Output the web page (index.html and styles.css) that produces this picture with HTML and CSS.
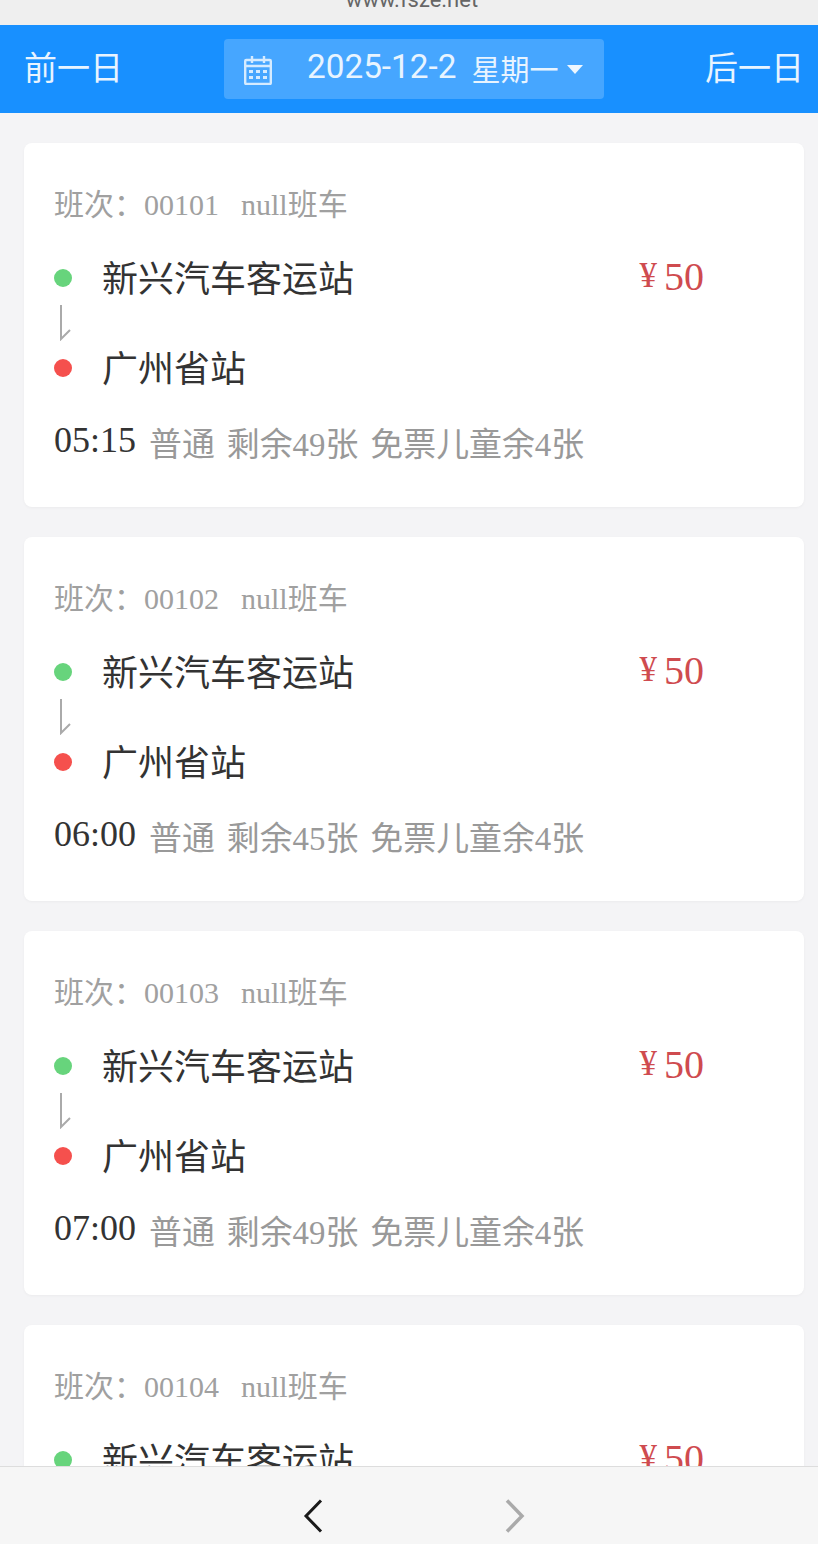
FILE: index.html
```html
<!DOCTYPE html>
<html lang="en">
<head>
	<meta charset="UTF-8">
	<title>班次列表</title>
	<link rel="stylesheet" href="styles.css">
</head>
<body>
	<div class="site-bar"><span>www.fsze.net</span></div>

	<div class="date-bar">
		<a class="day-link">前一日</a>
		<div class="date-box">
			<svg class="cal-icon" width="28" height="30" viewBox="0 0 28 30" fill="none" stroke="#d5ebff" stroke-width="2.400">
				<rect x="1.200" y="5" width="25.600" height="24" rx="1"/>
				<path d="M1 11h26M8 1v7M20 1v7"/>
				<path d="M5 15h4v3h-4zM12 15h4v3h-4zM19 15h4v3h-4zM5 21h4v3h-4zM12 21h4v3h-4zM19 21h4v3h-4z" fill="#d5ebff" stroke="none"/>
			</svg>
			<span class="date-num">2025-12-2</span>
			<span class="date-week">星期一</span>
			<i class="caret"></i>
		</div>
		<a class="day-link">后一日</a>
	</div>

	<div class="list">
		<div class="card">
			<div class="card-head"><span>班次：00101</span><span>null班车</span></div>
			<div class="station">
				<i class="dot green"></i><span class="name">新兴汽车客运站</span>
				<span class="price"><em>¥</em>50</span>
			</div>
			<div class="arrow-row">
				<svg width="12" height="36" viewBox="0 0 12 36" fill="none" stroke="#aaa" stroke-width="2"><path d="M2 0v34l9-9"/></svg>
			</div>
			<div class="station">
				<i class="dot red"></i><span class="name">广州省站</span>
			</div>
			<div class="card-foot"><span class="time">05:15</span><span>普通</span><span>剩余49张</span><span>免票儿童余4张</span></div>
		</div>

		<div class="card">
			<div class="card-head"><span>班次：00102</span><span>null班车</span></div>
			<div class="station">
				<i class="dot green"></i><span class="name">新兴汽车客运站</span>
				<span class="price"><em>¥</em>50</span>
			</div>
			<div class="arrow-row">
				<svg width="12" height="36" viewBox="0 0 12 36" fill="none" stroke="#aaa" stroke-width="2"><path d="M2 0v34l9-9"/></svg>
			</div>
			<div class="station">
				<i class="dot red"></i><span class="name">广州省站</span>
			</div>
			<div class="card-foot"><span class="time">06:00</span><span>普通</span><span>剩余45张</span><span>免票儿童余4张</span></div>
		</div>

		<div class="card">
			<div class="card-head"><span>班次：00103</span><span>null班车</span></div>
			<div class="station">
				<i class="dot green"></i><span class="name">新兴汽车客运站</span>
				<span class="price"><em>¥</em>50</span>
			</div>
			<div class="arrow-row">
				<svg width="12" height="36" viewBox="0 0 12 36" fill="none" stroke="#aaa" stroke-width="2"><path d="M2 0v34l9-9"/></svg>
			</div>
			<div class="station">
				<i class="dot red"></i><span class="name">广州省站</span>
			</div>
			<div class="card-foot"><span class="time">07:00</span><span>普通</span><span>剩余49张</span><span>免票儿童余4张</span></div>
		</div>

		<div class="card">
			<div class="card-head"><span>班次：00104</span><span>null班车</span></div>
			<div class="station">
				<i class="dot green"></i><span class="name">新兴汽车客运站</span>
				<span class="price"><em>¥</em>50</span>
			</div>
		</div>
	</div>

	<div class="browser-bar">
		<svg width="20" height="34" viewBox="0 0 20 34" fill="none" stroke="#1a1a1a" stroke-width="3"><path d="M18 1.500L3 17l15 15.500"/></svg>
		<svg width="20" height="34" viewBox="0 0 20 34" fill="none" stroke="#aaa" stroke-width="3.500"><path d="M2 1.500L17 17 2 32.500"/></svg>
	</div>
</body>
</html>
```

FILE: styles.css
```css
*{margin: 0; padding: 0; box-sizing: border-box;}
body{
	width: 818px;
	height: 1544px;
	display: flex;
	flex-direction: column;
	overflow: hidden;
	background: #f4f4f6;
	font-family: "Liberation Serif", "Noto Sans CJK SC", serif;
}

.site-bar{
	flex: none;
	height: 25px;
	overflow: hidden;
	background: #efefef;
	text-align: center;
	color: #666;
	font-family: "Roboto", "Liberation Sans", sans-serif;
	font-size: 22px;
	line-height: 22px;
	padding-left: 6px;
}
.site-bar span{display: block; margin-top: -11px;}

.date-bar{
	flex: none;
	height: 88px;
	padding: 0 17px 0 25px;
	display: flex;
	align-items: center;
	justify-content: space-between;
	background: #1890ff;
	color: #e8f4ff;
	font-family: "Roboto", "Noto Sans CJK SC", sans-serif;
}
.day-link{font-size: 33px; width: 96px; white-space: nowrap; padding-bottom: 7px; margin-left: -1px;}
.date-box{
	width: 380px;
	height: 60px;
	margin-left: 2px;
	padding-left: 20px;
	display: flex;
	align-items: center;
	background: #46a6ff;
	border-radius: 4px;
}
.cal-icon{flex: none; margin-top: 2px;}
.date-num{font-size: 33.300px; margin-left: 35px; margin-top: -6px;}
.date-week{font-size: 29px; margin-left: 15px; margin-top: -2px;}
.caret{
	width: 0;
	height: 0;
	margin-left: 9px;
	border-left: 8px solid transparent;
	border-right: 8px solid transparent;
	border-top: 9px solid #eef7ff;
}

.list{
	flex: 1;
	min-height: 0;
	overflow: hidden;
	padding: 30px 14px 0 24px;
	display: flex;
	flex-direction: column;
	gap: 30px;
}
.card{
	flex: none;
	padding: 40px 30px 41px;
	background: #fff;
	border-radius: 8px;
	box-shadow: 0 1px 3px rgba(0,0,0,.04);
}
.card-head{
	display: flex;
	gap: 22px;
	height: 44px;
	margin-bottom: 21px;
	font-size: 30px;
	line-height: 44px;
	color: #a0a0a0;
}

.station{
	height: 60px;
	display: flex;
	align-items: center;
	color: #333;
}
.dot{
	flex: none;
	width: 18px;
	height: 18px;
	border-radius: 50%;
}
.green{background: #67d47c;}
.red{background: #f5504d;}
.name{flex: 1; margin-left: 30px; font-size: 36px; padding-bottom: 5px;}
.price{
	margin-right: 70px;
	font-size: 40px;
	color: #cf4b4f;
	padding-bottom: 3px;
}
.price em{font-style: normal; font-size: 35px; margin-right: 7px; vertical-align: 3px;}

.arrow-row{height: 30px; display: flex; align-items: center; padding-left: 5px;}
.arrow-row svg{flex: none;}

.card-foot{
	display: flex;
	align-items: center;
	gap: 12px;
	height: 50px;
	margin-top: 18px;
	font-size: 32.900px;
	color: #999;
}
.time{font-size: 36px; color: #333; margin-right: 1px; padding-bottom: 2px;}

.browser-bar{
	flex: none;
	height: 78px;
	padding: 32px 0 0 303px;
	display: flex;
	align-items: flex-start;
	gap: 182px;
	background: #f6f6f6;
	border-top: 1px solid #ddd;
}
```
